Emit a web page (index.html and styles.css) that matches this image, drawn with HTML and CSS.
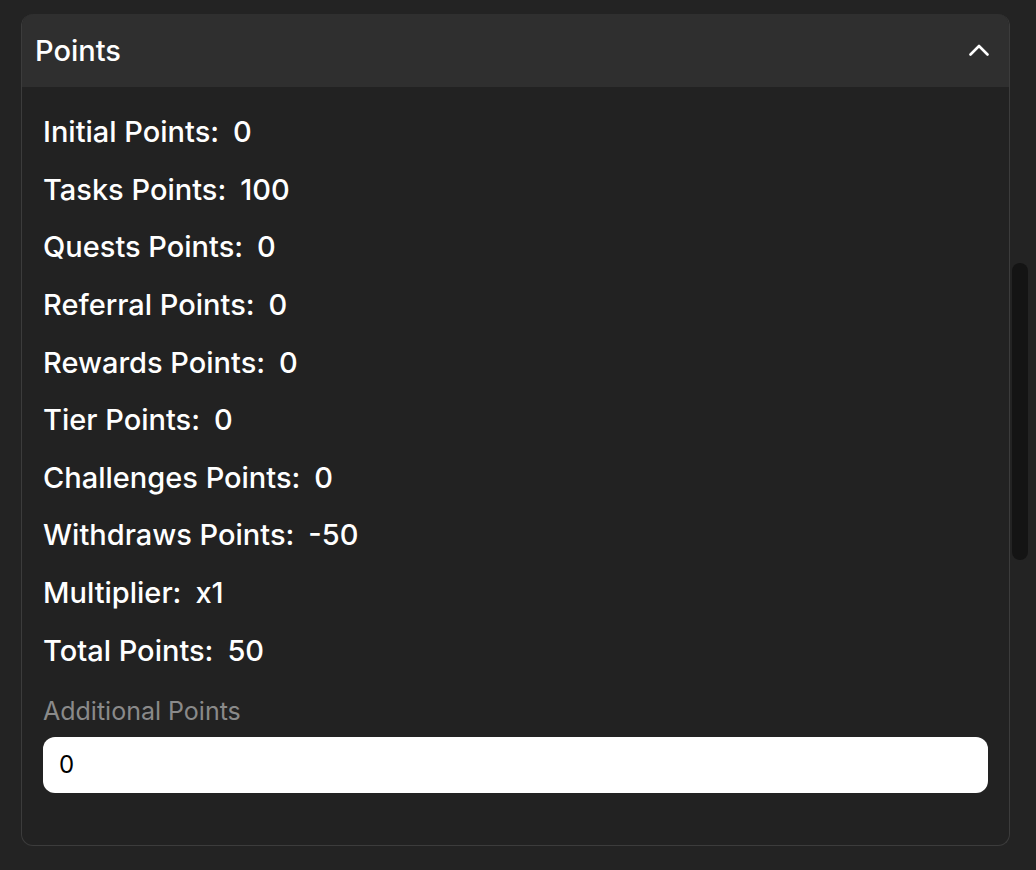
FILE: index.html
```html
<!DOCTYPE html>
<html>
<head>
<meta charset="utf-8">
<link rel="stylesheet" href="styles.css">
</head>
<body>
<div class="page">
  <div class="content">
    <section class="card">
      <header class="card-head">
        <h2 class="card-title">Points</h2>
        <svg class="chevron" width="20" height="12" viewBox="0 0 20 12"><path d="M1.5 10.5 L10 2 L18.5 10.5" fill="none" stroke="#fff" stroke-width="2.6" stroke-linecap="round" stroke-linejoin="round"/></svg>
      </header>
      <div class="card-body">
        <ul class="stats">
          <li><span>Initial Points:</span><span>0</span></li>
          <li><span>Tasks Points:</span><span>100</span></li>
          <li><span>Quests Points:</span><span>0</span></li>
          <li><span>Referral Points:</span><span>0</span></li>
          <li><span>Rewards Points:</span><span>0</span></li>
          <li><span>Tier Points:</span><span>0</span></li>
          <li><span>Challenges Points:</span><span>0</span></li>
          <li><span>Withdraws Points:</span><span>-50</span></li>
          <li><span>Multiplier:</span><span>x1</span></li>
          <li><span>Total Points:</span><span>50</span></li>
        </ul>
        <label class="field-label" for="add">Additional Points</label>
        <input class="field" id="add" type="text" value="0">
      </div>
    </section>
  </div>
  <div class="scrollbar"><div class="thumb"></div></div>
</div>
</body>
</html>
```

FILE: styles.css
```css
* { box-sizing: border-box; }
html, body { margin: 0; padding: 0; }
body {
  background: #232323;
  font-family: Inter, "Noto Sans", sans-serif;
  color: #fff;
  width: 1036px;
  height: 870px;
  overflow: hidden;
}
.page {
  display: flex;
  height: 870px;
}
.content {
  flex: 1;
  padding: 14px 2px 0 21px;
}
.scrollbar {
  width: 24px;
  padding: 263px 8px 0 0;
}
.thumb {
  width: 16px;
  height: 297px;
  background: #141414;
  border-radius: 8px;
}
.card {
  border-radius: 12px;
  overflow: hidden;
  border: 1px solid #3c3c3c;
  border-top: none;
  background: #222222;
}
.card-head {
  height: 73px;
  background: #2f2f2f;
  display: flex;
  align-items: center;
  justify-content: space-between;
  padding: 0 21px 0 14px;
  margin: 0 -1px;
}
.card-title {
  margin: 0;
  font-size: 29px;
  font-weight: 450;
  letter-spacing: 0;
}
.chevron { display: block; margin-top: -2px; }
.card-body {
  padding: 16px 21px 52px 21px;
}
.stats {
  list-style: none;
  margin: 0;
  padding: 0;
}
.stats li {
  display: flex;
  gap: 14px;
  font-size: 29px;
  font-weight: 450;
  height: 57.6px;
  align-items: center;
}
.field-label {
  display: block;
  margin-top: 14px;
  font-size: 25px;
  color: #8a8a8a;
  line-height: 36px;
}
.field {
  display: block;
  margin-top: 8px;
  width: 100%;
  height: 56px;
  border: none;
  border-radius: 12px;
  background: #fff;
  color: #000;
  font-family: Inter, "Noto Sans", sans-serif;
  font-size: 24px;
  padding: 0 16px;
  outline: none;
}
```
